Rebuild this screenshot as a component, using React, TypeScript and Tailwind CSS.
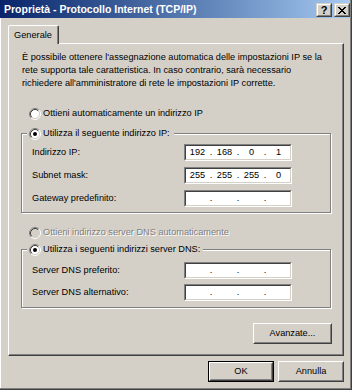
import React from "react";

function Radio({ checked = false, disabled = false }: { checked?: boolean; disabled?: boolean }) {
  return (
    <svg width="12" height="12" viewBox="0 0 12 12" className="shrink-0">
      <circle cx="6" cy="6" r="4.5" fill={disabled ? "#d4d0c8" : "#ffffff"} />
      <path d="M2.11 9.89 A5.5 5.5 0 0 1 9.89 2.11" stroke="#808080" fill="none" />
      <path d="M9.89 2.11 A5.5 5.5 0 0 1 2.11 9.89" stroke="#ffffff" fill="none" />
      <path d="M2.82 9.18 A4.5 4.5 0 0 1 9.18 2.82" stroke="#404040" fill="none" />
      <path d="M9.18 2.82 A4.5 4.5 0 0 1 2.82 9.18" stroke="#d4d0c8" fill="none" />
      {checked && <circle cx="6" cy="6" r="2" fill={disabled ? "#808080" : "#000000"} />}
    </svg>
  );
}

function IpBox({ parts }: { parts?: string[] }) {
  const p = parts ?? ["", "", "", ""];
  return (
    <div className="w-[108px] h-[17px] border border-t-[#808080] border-l-[#808080] border-r-white border-b-white">
      <div className="h-full border border-t-[#404040] border-l-[#404040] border-r-[#d4d0c8] border-b-[#d4d0c8] bg-white flex items-center">
        <span className="w-[23px] text-center">{p[0]}</span>
        <span className="w-[4px] text-center">.</span>
        <span className="w-[23px] text-center">{p[1]}</span>
        <span className="w-[4px] text-center">.</span>
        <span className="w-[23px] text-center">{p[2]}</span>
        <span className="w-[4px] text-center">.</span>
        <span className="w-[23px] text-center">{p[3]}</span>
      </div>
    </div>
  );
}

function Row({ label, parts }: { label: string; parts?: string[] }) {
  return (
    <div className="flex items-center h-[17px]">
      <span className="w-[152px]">{label}</span>
      <IpBox parts={parts} />
    </div>
  );
}

function Button({ label, width, isDefault = false }: { label: string; width: string; isDefault?: boolean }) {
  const inner = (
    <div className="h-full border border-t-white border-l-white border-r-[#404040] border-b-[#404040]">
      <div className="h-full border border-t-[#d4d0c8] border-l-[#d4d0c8] border-r-[#808080] border-b-[#808080] flex items-center justify-center">
        {label}
      </div>
    </div>
  );
  if (isDefault) {
    return <div className={`${width} h-[21px] border border-black`}>{inner}</div>;
  }
  return <div className={`${width} h-[21px]`}>{inner}</div>;
}

function CaptionButton({ children }: { children: React.ReactNode }) {
  return (
    <div className="w-[16px] h-[14px] bg-[#d4d0c8] border border-t-[#d4d0c8] border-l-[#d4d0c8] border-r-[#404040] border-b-[#404040]">
      <div className="h-full border border-t-white border-l-white border-r-[#808080] border-b-[#808080] flex items-center justify-center">
        {children}
      </div>
    </div>
  );
}

export default function App() {
  return (
    <div className="w-[352px] h-[390px] bg-[#d4d0c8] font-['Liberation_Sans',Arial,sans-serif] text-[9.2px] leading-[13px] text-black border-r border-b border-[#404040] overflow-hidden">
      <div className="h-full border-r border-b border-[#808080] flex flex-col">
        {/* Title bar */}
        <div className="h-[18px] shrink-0 flex items-start bg-linear-to-r from-[#0a246a] to-[#a6caf0]">
          <span className="pl-[4px] leading-[18px] text-white font-bold text-[10.5px] whitespace-nowrap">
            Proprietà - Protocollo Internet (TCP/IP)
          </span>
          <div className="ml-auto flex gap-[2px] pt-[3px]">
            <CaptionButton>
              <span className="font-bold text-[11px] leading-[10px] text-black">?</span>
            </CaptionButton>
            <CaptionButton>
              <svg width="8" height="7" viewBox="0 0 8 7">
                <path d="M0 0h2v1h1v1h2V1h1V0h2v1H7v1H6v1H5v1h1v1h1v1h1v1H6V6H5V5H3v1H2v1H0V6h1V5h1V4h1V3H2V2H1V1H0z" fill="#000" />
              </svg>
            </CaptionButton>
          </div>
        </div>

        {/* Body */}
        <div className="flex-1 border-l border-white pl-[7px] pr-[6px] pt-[7px] flex flex-col">
          {/* Tabs */}
          <div className="h-[18px] flex">
            <div className="relative z-10 w-[51px] h-[19px] bg-[#d4d0c8] rounded-t-[2px] border-t border-l border-r border-t-white border-l-white border-r-[#404040]">
              <div className="h-full border-r border-[#808080] flex items-center justify-center">Generale</div>
            </div>
          </div>

          {/* Panel */}
          <div className="h-[313px] border border-t-white border-l-white border-r-[#404040] border-b-[#404040]">
            <div className="h-full border-r border-b border-[#808080] pl-[12px] pr-[11px] pt-[7px] flex flex-col">
              <p className="ml-[1px] whitespace-nowrap">
                È possibile ottenere l'assegnazione automatica delle impostazioni IP se la
                <br />
                rete supporta tale caratteristica. In caso contrario, sarà necessario
                <br />
                richiedere all'amministratore di rete le impostazioni IP corrette.
              </p>

              <div className="mt-[17px] h-[13px] flex items-center gap-[2px] pl-[8px]">
                <Radio />
                <span>Ottieni automaticamente un indirizzo IP</span>
              </div>

              {/* Group 1 */}
              <div className="mt-[13px] h-[80px] border border-[#808080] shadow-[inset_1px_1px_0_#ffffff,1px_1px_0_#ffffff] flex flex-col">
                <div className="-mt-[7px] ml-[5px] pl-[2px] pr-[4px] h-[13px] w-fit bg-[#d4d0c8] flex items-center gap-[2px] relative">
                  <Radio checked />
                  <span>Utilizza il seguente indirizzo IP:</span>
                </div>
                <div className="mt-[4px] pl-[10px] flex flex-col gap-[6px]">
                  <Row label="Indirizzo IP:" parts={["192", "168", "0", "1"]} />
                  <Row label="Subnet mask:" parts={["255", "255", "255", "0"]} />
                  <Row label="Gateway predefinito:" />
                </div>
              </div>

              <div className="mt-[13px] h-[13px] flex items-center gap-[2px] pl-[8px]">
                <Radio disabled />
                <span className="text-[#808080] [text-shadow:1px_1px_0_#ffffff]">
                  Ottieni indirizzo server DNS automaticamente
                </span>
              </div>

              {/* Group 2 */}
              <div className="mt-[10px] h-[59px] border border-[#808080] shadow-[inset_1px_1px_0_#ffffff,1px_1px_0_#ffffff] flex flex-col">
                <div className="-mt-[7px] ml-[5px] pl-[2px] pr-[3px] h-[13px] w-fit bg-[#d4d0c8] flex items-center gap-[2px] relative">
                  <Radio checked />
                  <span>Utilizza i seguenti indirizzi server DNS:</span>
                </div>
                <div className="mt-[6px] pl-[10px] flex flex-col gap-[5px]">
                  <Row label="Server DNS preferito:" />
                  <Row label="Server DNS alternativo:" />
                </div>
              </div>

              <div className="mt-[15px] flex justify-end -mr-[1px]">
                <Button label="Avanzate..." width="w-[79px]" />
              </div>
            </div>
          </div>

          {/* Bottom buttons */}
          <div className="mt-[5px] flex justify-end gap-[4px]">
            <Button label="OK" width="w-[66px]" isDefault />
            <Button label="Annulla" width="w-[66px]" />
          </div>
        </div>
      </div>
    </div>
  );
}
